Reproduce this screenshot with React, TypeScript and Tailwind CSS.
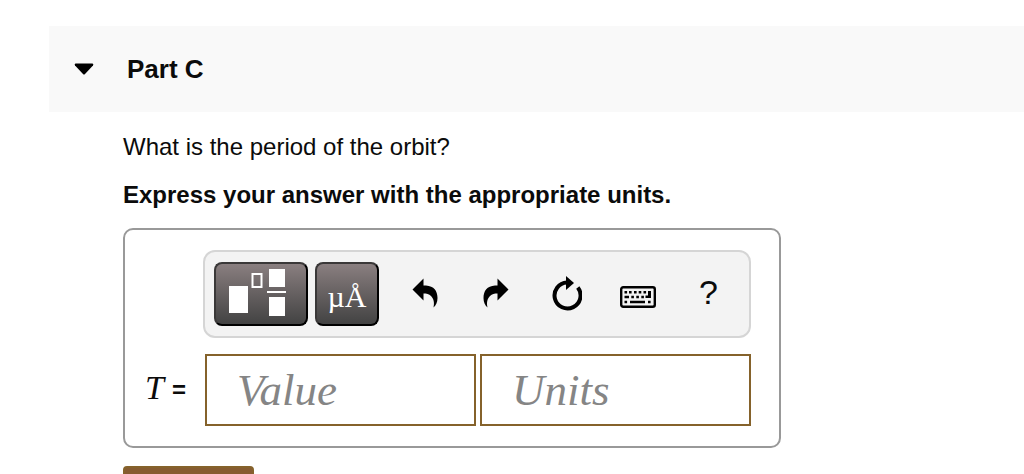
import React from "react";

const TemplatesIcon = () => (
	<svg width="90" height="60" viewBox="0 0 90 60" fill="#fff" aria-hidden="true">
		<rect x="13" y="22" width="19" height="27" />
		<rect x="36.5" y="10" width="9" height="13" fill="none" stroke="#fff" strokeWidth="2" />
		<rect x="53" y="5" width="16" height="18" />
		<rect x="51" y="27" width="19" height="2" />
		<rect x="53" y="33" width="16" height="19" />
	</svg>
);

const UndoIcon = () => (
	<svg width="26" height="32" viewBox="0 0 26 32" aria-hidden="true">
		<path d="M0.5 11.5 L11.5 0.5 V7.5 H14 C22 8 25.5 13 25.5 20 C25.5 24 24 27.5 21.5 29.5 C22.5 25 22 21 19 18 C17 16 14.5 15.5 11.5 15.5 V22.5 Z" />
	</svg>
);

const RedoIcon = () => (
	<svg width="26" height="32" viewBox="0 0 26 32" aria-hidden="true">
		<path d="M25.5 11.5 L14.5 0.5 V7.5 H12 C4 8 0.5 13 0.5 20 C0.5 24 2 27.5 4.5 29.5 C3.5 25 4 21 7 18 C9 16 11.5 15.5 14.5 15.5 V22.5 Z" />
	</svg>
);

const ResetIcon = () => (
	<svg width="30" height="36" viewBox="0 0 30 36" aria-hidden="true">
		<path d="M25.8 11.5 A13 13 0 1 1 15 6.5" fill="none" stroke="#000" strokeWidth="4" />
		<path d="M14 0 L22 7 L14 14 Z" />
	</svg>
);

const KeyboardIcon = () => (
	<svg width="36" height="28" viewBox="0 -6 36 28" aria-hidden="true">
		<rect x="1.2" y="1.2" width="33.6" height="19.6" rx="2" fill="none" stroke="#000" strokeWidth="2.4" />
		<path d="M4.5 6.2h2.6M9 6.2h2.6M14 6.2h2.6M18.7 6.2h2.6M23.5 6.2h2.6M4.5 11h4.5M11.3 11h2.6M16.3 11h2.6M21.3 11h2.6M4.5 16h2.6M10 16h15M28 16h2.6" stroke="#000" strokeWidth="2.4" />
		<path d="M28 5h3v7h-5.500v-2.400h2.500z" />
	</svg>
);

const tools = [
	{ name: "Undo", icon: <UndoIcon /> },
	{ name: "Redo", icon: <RedoIcon /> },
	{ name: "Reset", icon: <ResetIcon /> },
	{ name: "Keyboard shortcuts", icon: <KeyboardIcon /> },
	{ name: "Help", icon: <span className="pb-1 text-[34px] leading-none">?</span> },
];

const darkButton =
	"flex h-16 items-center justify-center rounded-lg border-2 border-t-[#3a3838] border-l-[#3a3838] border-r-black border-b-black bg-linear-to-b from-[#8a7f80] to-[#434343] text-white";

const field =
	"h-[72px] w-full min-w-0 border-2 border-[#85622b] bg-white px-[30px] font-['Liberation_Serif',serif] text-[45px] italic outline-none placeholder:text-[#858585]";

const App = () => {
	return (
		<main className="h-screen overflow-hidden bg-white pt-[26px] font-['Liberation_Sans',Arial,sans-serif] text-[#0b0b0b]">
			<header className="ml-[49px] bg-[#f9f9f9]">
				<button type="button" aria-expanded="true" className="flex h-[86px] w-full items-center gap-[33px] pl-[25px] text-[26px] font-bold">
					<svg width="20" height="12" viewBox="0 0 20 12" aria-hidden="true">
						<path d="M1.5 0.5 H18.5 Q20 1 19 2.5 L11 11 Q10 12 9 11 L1 2.5 Q0 1 1.5 0.5 Z" />
					</svg>
					Part C
				</button>
			</header>
			<section className="pt-5 pl-[123px]">
				<p className="text-[24px] leading-[30px]">What is the period of the orbit?</p>
				<p className="mt-[18px] text-[24px] leading-[30px] font-bold">Express your answer with the appropriate units.</p>
				<form className="mt-[18px]">
					<div className="max-w-[658px] rounded-[10px] border-2 border-[#999] pt-5 pr-7 pb-5 pl-5">
						<div className="ml-[58px] flex h-[88px] items-center rounded-xl border-2 border-[#d5d5d5] bg-[#f3f3f3] pl-[9px]">
							<button type="button" aria-label="Templates" className={`${darkButton} w-[94px]`}>
								<TemplatesIcon />
							</button>
							<button type="button" aria-label="Symbols" className={`${darkButton} mr-[10px] ml-[7px] w-16 pt-1 font-['Liberation_Serif',serif] text-[30px]`}>
								µÅ
							</button>
							{tools.map(tool => (
								<button key={tool.name} type="button" aria-label={tool.name} className="flex h-16 w-[71px] items-center justify-center">
									{tool.icon}
								</button>
							))}
						</div>
						<div className="mt-4 flex items-center">
							<label htmlFor="value" className="flex w-[60px] shrink-0 items-center gap-2 text-[24px]">
								<i className="pb-1 font-['Liberation_Serif',serif] text-[34px] leading-none">T</i>
								<b className="leading-none">=</b>
							</label>
							<div className="grid min-w-0 flex-1 grid-cols-2 gap-1">
								<input id="value" type="text" placeholder="Value" className={field} />
								<input type="text" aria-label="Units" placeholder="Units" className={field} />
							</div>
						</div>
					</div>
					<button type="submit" aria-label="Submit" className="mt-[18px] block h-14 w-[131px] rounded-t-[4px] border-2 border-[#85622b] bg-[#865b31]" />
				</form>
			</section>
		</main>
	);
};

export default App;
